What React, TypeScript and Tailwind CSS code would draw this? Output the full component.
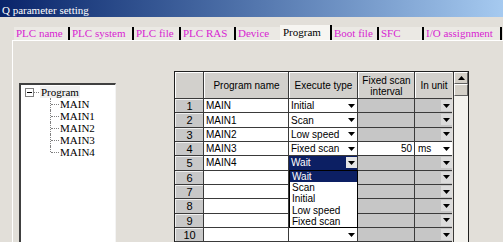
const serif = "font-['Liberation_Serif',serif]";
const sans = "font-['Liberation_Sans',Arial,sans-serif]";

const tabs = [
  { label: 'PLC name', w: 'w-[56px]', sep: true },
  { label: 'PLC system', w: 'w-[64px]', sep: true },
  { label: 'PLC file', w: 'w-[47px]', sep: true },
  { label: 'PLC RAS', w: 'w-[55px]', sep: true },
  { label: 'Device', w: 'w-[44px]', sep: false },
  { label: 'Program', w: 'w-[52px]', sep: true, active: true },
  { label: 'Boot file', w: 'w-[47px]', sep: true },
  { label: 'SFC', w: 'w-[45px]', sep: true },
  { label: 'I/O assignment', w: 'w-[78px]', sep: true },
];

type Row = { name?: string; exec?: string; interval?: string; unit?: string; selected?: boolean };

const rows: Row[] = [
  { name: 'MAIN', exec: 'Initial' },
  { name: 'MAIN1', exec: 'Scan' },
  { name: 'MAIN2', exec: 'Low speed' },
  { name: 'MAIN3', exec: 'Fixed scan', interval: '50', unit: 'ms' },
  { name: 'MAIN4', exec: 'Wait', selected: true },
  {},
  {},
  {},
  {},
  {},
];

const Arrow = ({ bg = 'bg-white' }: { bg?: string }) => (
  <div className={`w-[11px] h-[11px] ${bg} flex items-center justify-center shrink-0`}>
    <svg width="7" height="4" viewBox="0 0 7 4">
      <path d="M0 0H7L3.5 4Z" fill="#000" />
    </svg>
  </div>
);

const TreeItem = ({ label, last }: { label: string; last?: boolean }) => (
  <div className="flex items-center h-[12px] relative">
    <div className={`absolute left-[29px] top-0 w-0 border-l border-dotted border-[#808080] ${last ? 'h-[6px]' : 'h-[12px]'}`} />
    <div className="ml-[30px] w-[8px] border-t border-dotted border-[#808080]" />
    <span className="ml-[1px]">{label}</span>
  </div>
);

export default function App() {
  return (
    <div className={`w-[503px] h-[242px] bg-[#e2dfd9] overflow-hidden ${sans}`}>
      {/* title bar */}
      <div className={`h-[17px] bg-gradient-to-r from-[#0a246a] to-[#a6caf0] text-white text-[11px] leading-[21px] pl-[2px] ${serif}`}>
        Q parameter setting
      </div>

      {/* tabs */}
      <div className={`flex items-end mt-[8px] pl-[14px] h-[15px] text-[11px] ${serif}`}>
        {tabs.map((t) => (
          <div
            key={t.label}
            className={`${t.w} flex items-center pl-[2px] ${t.active ? 'h-[15px] bg-[#f6f5f1] text-black pl-[3px]' : 'h-[13px] bg-[#ebe9e4] text-[#d81fd2]'} ${t.sep ? 'border-r-2 border-black' : ''}`}
          >
            <span className="whitespace-nowrap">{t.label}</span>
          </div>
        ))}
      </div>

      {/* panel */}
      <div className="ml-[12px] border-l border-t border-white flex items-start h-[202px]">
        {/* tree */}
        <div className={`ml-[6px] mt-[42px] w-[97px] h-[200px] bg-white border-t-2 border-l-2 border-t-[#404040] border-l-[#404040] border-r border-r-[#f4f4f4] text-[11px] leading-[12px] ${serif}`}>
          <div className="mt-[1px] flex items-center h-[12px]">
            <div className="ml-[4px] w-[9px] h-[9px] border border-[#808080] bg-white flex items-center justify-center">
              <div className="w-[5px] h-px bg-black" />
            </div>
            <div className="w-[5px] border-t border-dotted border-[#808080]" />
            <span className="ml-[1px] px-[1px] bg-[#f0f0f0]">Program</span>
          </div>
          <TreeItem label="MAIN" />
          <TreeItem label="MAIN1" />
          <TreeItem label="MAIN2" />
          <TreeItem label="MAIN3" />
          <TreeItem label="MAIN4" last />
        </div>

        {/* table */}
        <div className="ml-[58px] mt-[30px] relative border-l border-t border-r border-[#202020] flex text-[10px] h-[180px]">
          <div className="flex flex-col gap-px bg-[#3a3a3a]">
            {/* header */}
            <div className="flex gap-px h-[26px]">
              {[
                { w: 'w-[28px]', t: '' },
                { w: 'w-[84px]', t: 'Program name' },
                { w: 'w-[68px]', t: 'Execute type' },
                { w: 'w-[56px]', t: 'Fixed scan\ninterval' },
                { w: 'w-[37px]', t: 'In unit' },
              ].map((h, i) => (
                <div
                  key={i}
                  className={`${h.w} bg-[#d2d0cc] border-t border-l border-white flex items-center justify-center text-center leading-[11px] whitespace-pre-line`}
                >
                  {h.t}
                </div>
              ))}
            </div>
            {rows.map((r, i) => (
              <div key={i} className="flex gap-px h-[13.33px]">
                <div className="w-[28px] bg-[#c8c8c8] border-t border-l border-[#f0f0f0] flex items-center justify-center text-[11px]">
                  {i + 1}
                </div>
                <div className="w-[84px] bg-white flex items-center pl-[2px]">{r.name}</div>
                <div className={`w-[68px] flex items-center justify-between ${r.selected ? 'bg-[#0c1f63] text-white' : 'bg-white'}`}>
                  <span className="pl-[2px]">{r.exec}</span>
                  <Arrow bg={r.selected ? 'bg-[#e6e6e6]' : 'bg-white'} />
                </div>
                <div className={`w-[56px] flex items-center justify-end pr-[2px] ${r.interval ? 'bg-white' : 'bg-[#c6c6c6]'}`}>
                  {r.interval}
                </div>
                <div className={`w-[37px] flex items-center justify-between ${r.unit ? 'bg-white' : 'bg-[#c6c6c6]'}`}>
                  <span className="pl-[3px]">{r.unit}</span>
                  <Arrow bg={r.unit ? 'bg-white' : 'bg-[#dcdcdc]'} />
                </div>
              </div>
            ))}
          </div>

          {/* scrollbar */}
          <div className="w-[15px] ml-px flex flex-col bg-[#f3f2ee] border-l border-[#3a3a3a]">
            <div className="h-[12px] bg-[#d4d0c8] border-t border-l border-white border-b border-r border-b-[#606060] border-r-[#606060] flex items-center justify-center">
              <svg width="7" height="4" viewBox="0 0 7 4">
                <path d="M0 4H7L3.5 0Z" fill="#000" />
              </svg>
            </div>
            <div className="h-[12px] bg-[#d4d0c8] border-t border-l border-white border-b border-r border-b-[#606060] border-r-[#606060]" />
          </div>

          {/* open dropdown */}
          <div className="absolute left-[114px] top-[98px] w-[69px] border border-black bg-white flex flex-col">
            {['Wait', 'Scan', 'Initial', 'Low speed', 'Fixed scan'].map((o, i) => (
              <div
                key={o}
                className={`h-[11.2px] leading-[11px] pl-[2px] ${i === 0 ? 'bg-[#0c1f63] text-white' : 'text-black'}`}
              >
                {o}
              </div>
            ))}
          </div>
        </div>
      </div>
    </div>
  );
}
